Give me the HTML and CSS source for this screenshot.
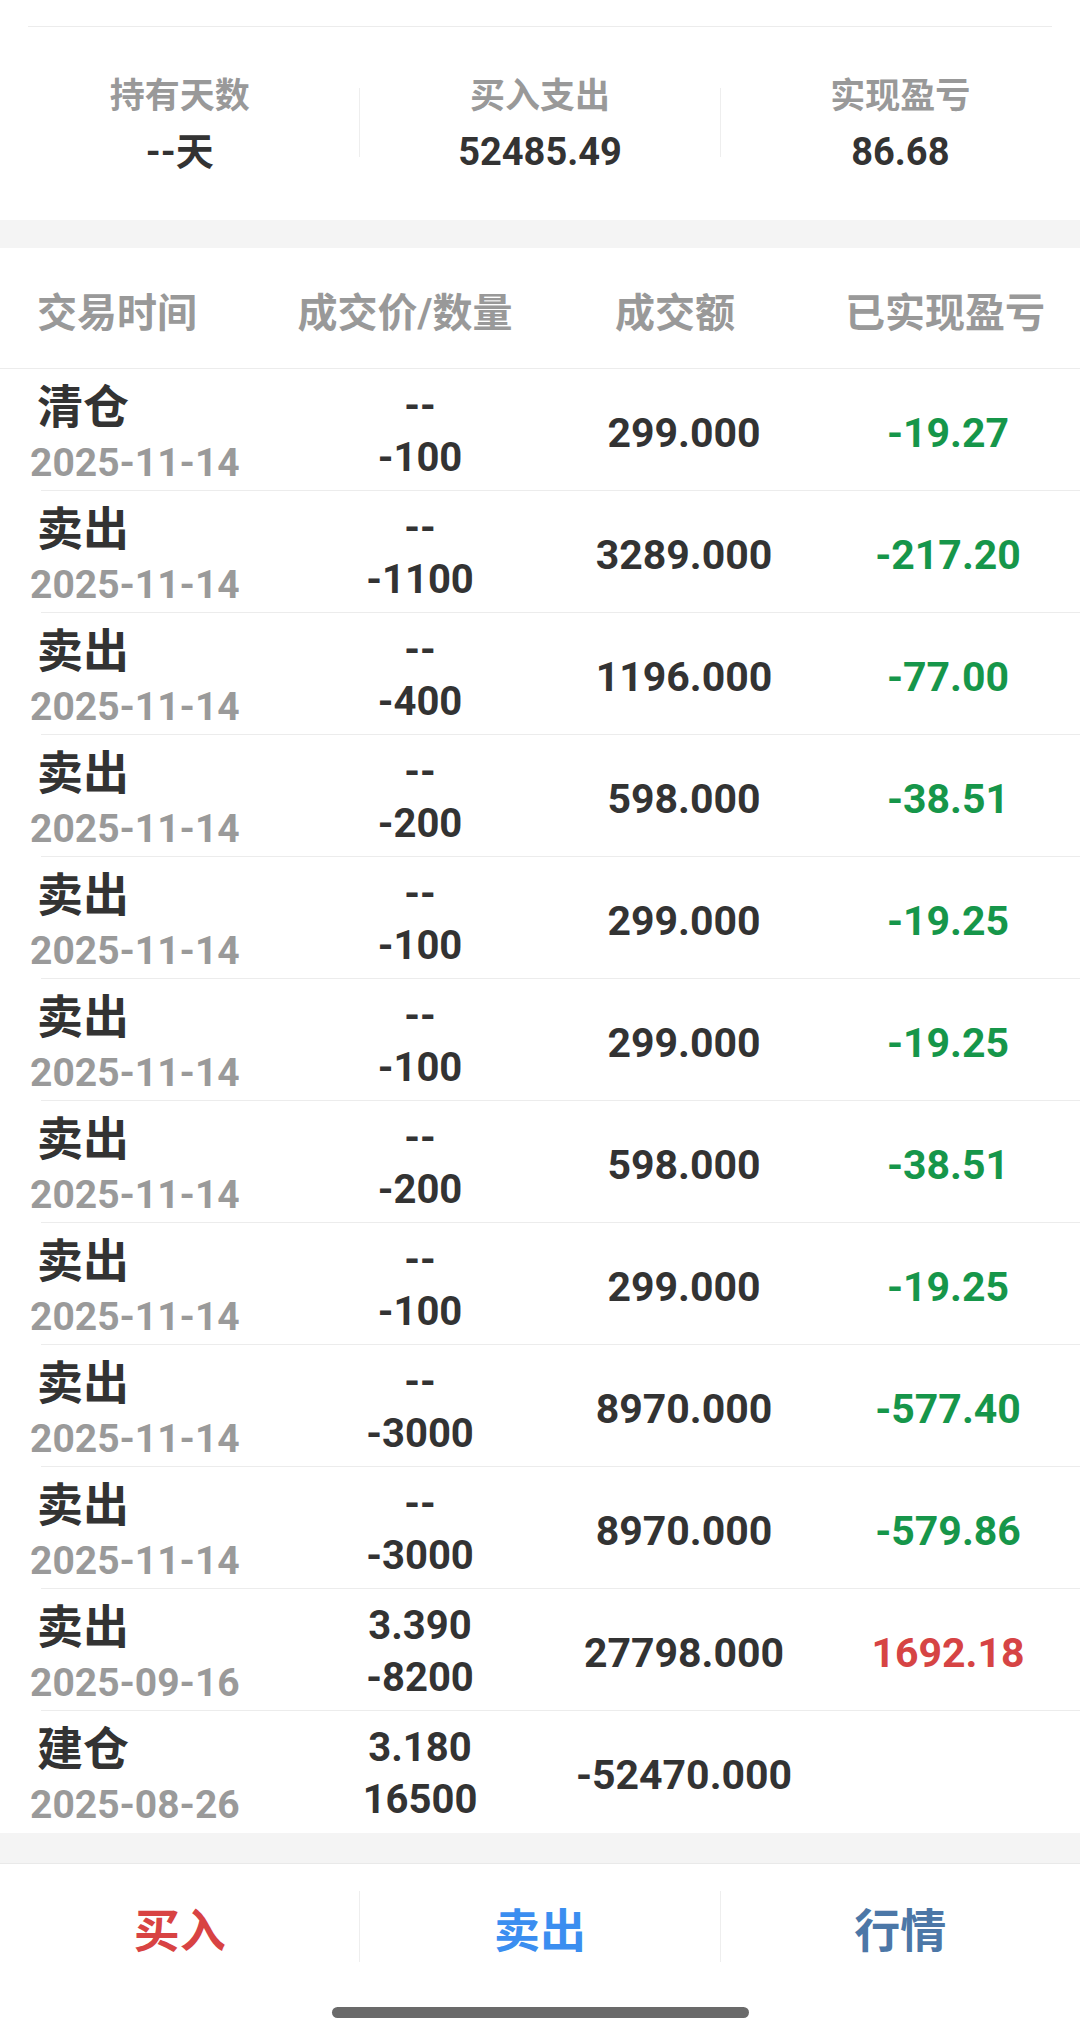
FILE: index.html
```html
<!DOCTYPE html>
<html lang="zh-CN">
<head>
<meta charset="utf-8">
<title>持仓明细</title>
<link rel="stylesheet" href="styles.css">
</head>
<body>
<div class="page">
  <div class="top-space"></div>
  <div class="top-line"></div>

  <section class="summary">
    <div class="sum-col">
      <div class="sum-label">持有天数</div>
      <div class="sum-value">--天</div>
    </div>
    <div class="sum-divider"></div>
    <div class="sum-col">
      <div class="sum-label">买入支出</div>
      <div class="sum-value">52485.49</div>
    </div>
    <div class="sum-divider"></div>
    <div class="sum-col">
      <div class="sum-label">实现盈亏</div>
      <div class="sum-value">86.68</div>
    </div>
  </section>

  <div class="gap-band"></div>

  <section class="table">
    <div class="thead">
      <div class="th th-first">交易时间</div>
      <div class="th">成交价/数量</div>
      <div class="th">成交额</div>
      <div class="th">已实现盈亏</div>
    </div>

    <div class="tr">
      <div class="td-time"><div class="t-type">清仓</div><div class="t-date">2025-11-14</div></div>
      <div class="td-price"><div class="p-line">--</div><div class="p-line">-100</div></div>
      <div class="td-amt">299.000</div>
      <div class="td-pl green">-19.27</div>
    </div>
    <div class="tr">
      <div class="td-time"><div class="t-type">卖出</div><div class="t-date">2025-11-14</div></div>
      <div class="td-price"><div class="p-line">--</div><div class="p-line">-1100</div></div>
      <div class="td-amt">3289.000</div>
      <div class="td-pl green">-217.20</div>
    </div>
    <div class="tr">
      <div class="td-time"><div class="t-type">卖出</div><div class="t-date">2025-11-14</div></div>
      <div class="td-price"><div class="p-line">--</div><div class="p-line">-400</div></div>
      <div class="td-amt">1196.000</div>
      <div class="td-pl green">-77.00</div>
    </div>
    <div class="tr">
      <div class="td-time"><div class="t-type">卖出</div><div class="t-date">2025-11-14</div></div>
      <div class="td-price"><div class="p-line">--</div><div class="p-line">-200</div></div>
      <div class="td-amt">598.000</div>
      <div class="td-pl green">-38.51</div>
    </div>
    <div class="tr">
      <div class="td-time"><div class="t-type">卖出</div><div class="t-date">2025-11-14</div></div>
      <div class="td-price"><div class="p-line">--</div><div class="p-line">-100</div></div>
      <div class="td-amt">299.000</div>
      <div class="td-pl green">-19.25</div>
    </div>
    <div class="tr">
      <div class="td-time"><div class="t-type">卖出</div><div class="t-date">2025-11-14</div></div>
      <div class="td-price"><div class="p-line">--</div><div class="p-line">-100</div></div>
      <div class="td-amt">299.000</div>
      <div class="td-pl green">-19.25</div>
    </div>
    <div class="tr">
      <div class="td-time"><div class="t-type">卖出</div><div class="t-date">2025-11-14</div></div>
      <div class="td-price"><div class="p-line">--</div><div class="p-line">-200</div></div>
      <div class="td-amt">598.000</div>
      <div class="td-pl green">-38.51</div>
    </div>
    <div class="tr">
      <div class="td-time"><div class="t-type">卖出</div><div class="t-date">2025-11-14</div></div>
      <div class="td-price"><div class="p-line">--</div><div class="p-line">-100</div></div>
      <div class="td-amt">299.000</div>
      <div class="td-pl green">-19.25</div>
    </div>
    <div class="tr">
      <div class="td-time"><div class="t-type">卖出</div><div class="t-date">2025-11-14</div></div>
      <div class="td-price"><div class="p-line">--</div><div class="p-line">-3000</div></div>
      <div class="td-amt">8970.000</div>
      <div class="td-pl green">-577.40</div>
    </div>
    <div class="tr">
      <div class="td-time"><div class="t-type">卖出</div><div class="t-date">2025-11-14</div></div>
      <div class="td-price"><div class="p-line">--</div><div class="p-line">-3000</div></div>
      <div class="td-amt">8970.000</div>
      <div class="td-pl green">-579.86</div>
    </div>
    <div class="tr">
      <div class="td-time"><div class="t-type">卖出</div><div class="t-date">2025-09-16</div></div>
      <div class="td-price"><div class="p-line">3.390</div><div class="p-line">-8200</div></div>
      <div class="td-amt">27798.000</div>
      <div class="td-pl red">1692.18</div>
    </div>
    <div class="tr tr-last">
      <div class="td-time"><div class="t-type">建仓</div><div class="t-date">2025-08-26</div></div>
      <div class="td-price"><div class="p-line">3.180</div><div class="p-line">16500</div></div>
      <div class="td-amt">-52470.000</div>
      <div class="td-pl"></div>
    </div>
  </section>

  <div class="gap-band gap-bottom"></div>

  <nav class="actions">
    <div class="act act-buy">买入</div>
    <div class="act-divider"></div>
    <div class="act act-sell">卖出</div>
    <div class="act-divider"></div>
    <div class="act act-quote">行情</div>
  </nav>
  <div class="home-area"><div class="home-bar"></div></div>
</div>
</body>
</html>
```
FILE: styles.css
```css
* { box-sizing: border-box; }

html, body {
  margin: 0;
  padding: 0;
  background: #ffffff;
}

body {
  font-family: Roboto, "Noto Sans CJK SC", sans-serif;
  font-weight: 700;
  color: #333333;
}

.page {
  width: 1080px;
  height: 2027px;
  overflow: hidden;
}

.top-space { height: 26px; }

.top-line {
  height: 1px;
  margin: 0 28px;
  background: #ececec;
}

/* summary */
.summary {
  display: flex;
  height: 193px;
  padding-top: 45px;
}

.sum-col {
  flex: 1;
  display: flex;
  flex-direction: column;
  align-items: center;
}

.sum-label {
  font-size: 35px;
  line-height: 50px;
  color: #999999;
}

.sum-value {
  font-size: 38px;
  line-height: 60px;
  color: #333333;
}

.sum-divider {
  width: 1px;
  height: 69px;
  margin-top: 16px;
  background: #eeeeee;
}

.gap-band {
  height: 28px;
  background: #f4f4f4;
}

.gap-bottom {
  height: 31px;
  border-bottom: 1px solid #e9e9e9;
}

/* table */
.thead {
  display: grid;
  grid-template-columns: repeat(4, 1fr);
  height: 121px;
  align-items: center;
  padding-top: 3px;
  border-bottom: 1px solid #ececec;
}

.th {
  font-size: 40px;
  color: #999999;
  text-align: center;
  white-space: nowrap;
}

.th-first {
  text-align: left;
  padding-left: 37px;
}

.tr {
  display: grid;
  grid-template-columns: 288px 264px 264px 264px;
  height: 122px;
  align-items: center;
  background: linear-gradient(#ececec, #ececec) no-repeat 41px 100% / calc(100% - 41px) 1px;
}

.tr-last {
  background: none;
}

.td-time {
  align-self: start;
  padding-top: 12px;
  display: flex;
  flex-direction: column;
}

.t-type {
  font-size: 46px;
  line-height: 52px;
  padding-left: 37px;
  color: #333333;
}

.t-date {
  font-size: 39px;
  line-height: 60px;
  padding-left: 30px;
  color: #9a9a9a;
}

.td-price {
  display: flex;
  flex-direction: column;
  align-items: center;
  padding-bottom: 0;
  padding-top: 2px;
}

.p-line {
  font-size: 40px;
  line-height: 52px;
  color: #333333;
}

.td-amt {
  font-size: 41px;
  text-align: center;
  color: #333333;
  padding-top: 4px;
  white-space: nowrap;
}

.td-pl {
  font-size: 41px;
  text-align: center;
  padding-top: 4px;
}

.green { color: #16964a; }
.red { color: #d64444; }

/* bottom actions */
.actions {
  display: flex;
  height: 98px;
  padding-top: 27px;
}

.act {
  flex: 1;
  height: 71px;
  display: flex;
  align-items: center;
  justify-content: center;
  font-size: 46px;
}

.act-divider {
  width: 1px;
  height: 71px;
  background: #eeeeee;
}

.act-buy { color: #d84343; }
.act-sell { color: #3b8ef0; }
.act-quote { color: #4c77a7; }

.home-area {
  height: 65px;
  display: flex;
  justify-content: center;
  padding-top: 45px;
}

.home-bar {
  width: 417px;
  height: 11px;
  border-radius: 6px;
  background: #6a6a6a;
}
```
